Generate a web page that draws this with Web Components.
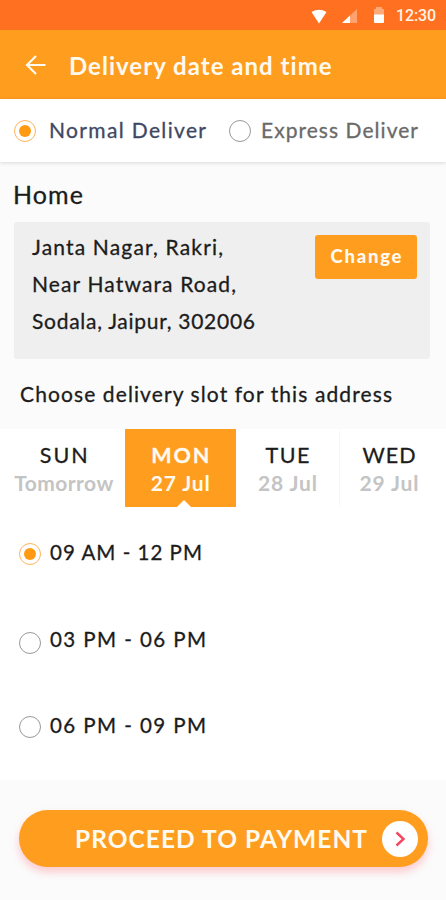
<!DOCTYPE html>
<html lang="en">
<head>
<meta charset="utf-8">
<title>Delivery date and time</title>
<style>
  body {
    margin: 0;
    width: 446px;
    height: 900px;
    overflow: hidden;
    background: #fbfbfb;
    color: #1c1c1c;
    font-family: Lato, "Liberation Sans", sans-serif;
  }
</style>
</head>
<body>
<delivery-screen></delivery-screen>

<script>
// One line of text, tracked so that it fills the given width
class TrackedText extends HTMLElement {
  constructor() {
    super();
    this.attachShadow({ mode: 'open' });
    this.shadowRoot.innerHTML = `
      <style>
        :host { display: block; width: max-content; white-space: nowrap; }
        span { display: inline-block; -webkit-text-stroke: var(--stroke, 0.3px); }
      </style>
      <span><slot></slot></span>
    `;
  }

  connectedCallback() {
    const target = Number(this.getAttribute('width'));
    const span = this.shadowRoot.querySelector('span');
    const count = this.textContent.length;
    const spacing = (target - span.getBoundingClientRect().width) / (count - 1);
    span.style.letterSpacing = spacing + 'px';
    span.style.marginRight = -spacing + 'px';
  }
}

class StatusBar extends HTMLElement {
  constructor() {
    super();
    this.attachShadow({ mode: 'open' });
    this.shadowRoot.innerHTML = `
      <style>
        :host {
          display: flex;
          align-items: center;
          justify-content: flex-end;
          box-sizing: border-box;
          height: 30px;
          padding: 2px 10px 0 0;
          background: #ff7020;
          color: #fff3e6;
          font: 500 16px/28px Roboto, sans-serif;
          --stroke: 0;
        }
        svg { display: block; margin-right: 11px; }
      </style>
      <svg width="74" height="18" viewBox="0 0 74 18" fill="#fff">
        <path d="M0.500 5Q8 0.500 15.500 5L8 16.500Z"/>
        <path d="M46 2V16H31Z" opacity=".35"/>
        <path d="M39 8.500V16H31Z"/>
        <path d="M63 2h2V0h6v2h2v6H63Z" opacity=".4"/>
        <path d="M63 7.500h10v7.500q0 1-1 1h-8q-1 0-1-1Z"/>
      </svg>
      <tracked-text width="40">12:30</tracked-text>
    `;
  }
}

class AppHeader extends HTMLElement {
  constructor() {
    super();
    this.attachShadow({ mode: 'open' });
    this.shadowRoot.innerHTML = `
      <style>
        :host {
          display: flex;
          align-items: center;
          box-sizing: border-box;
          height: 69px;
          padding: 1px 0 0 24px;
          background: #ff9d1f;
          color: #fffaf0;
          font-size: 24px;
          font-weight: 700;
          --stroke: 0;
        }
        svg { display: block; margin-right: 23px; }
      </style>
      <svg width="22" height="20" viewBox="0 0 22 20" fill="none" stroke="#fffaf0" stroke-width="2.200">
        <path d="M21.500 10H3M12 1L3 10L12 19"/>
      </svg>
      <slot></slot>
    `;
  }
}

class RadioOption extends HTMLElement {
  constructor() {
    super();
    this.attachShadow({ mode: 'open' });
    this.shadowRoot.innerHTML = `
      <style>
        :host { display: flex; align-items: center; }
        i {
          display: flex;
          align-items: center;
          justify-content: center;
          box-sizing: border-box;
          width: 22px;
          height: 22px;
          margin-right: var(--gap, 9px);
          margin-top: var(--drop, 0);
          border: 1.500px solid #999;
          border-radius: 50%;
          background: #fff;
        }
        :host([checked]) i { border-color: #ffb45c; }
        :host([checked]) i::before {
          content: '';
          width: 12px;
          height: 12px;
          border-radius: 50%;
          background: #ff9a12;
        }
      </style>
      <i></i>
      <slot></slot>
    `;
  }
}

class AddressCard extends HTMLElement {
  constructor() {
    super();
    this.attachShadow({ mode: 'open' });
    this.shadowRoot.innerHTML = `
      <style>
        :host {
          display: flex;
          justify-content: space-between;
          align-items: flex-start;
          box-sizing: border-box;
          height: 137px;
          margin: 13px 16px 0 14px;
          padding: 6px 13px 0 18px;
          border-radius: 3px;
          background: #efefef;
          font-size: 21px;
          line-height: 37.200px;
        }
        button {
          display: flex;
          justify-content: center;
          width: 102px;
          height: 44px;
          margin: 7px 0 0;
          padding: 0;
          border: 0;
          border-radius: 3px;
          background: #ff9d1f;
          color: #fffaf0;
          font: 900 18.500px/42px Lato, sans-serif;
          --stroke: 0;
        }
      </style>
      <div><slot></slot></div>
      <button><tracked-text width="71">Change</tracked-text></button>
    `;
  }
}

class DayTab extends HTMLElement {
  constructor() {
    super();
    this.attachShadow({ mode: 'open' });
    this.shadowRoot.innerHTML = `
      <style>
        :host {
          display: flex;
          flex-direction: column;
          align-items: center;
          box-sizing: border-box;
          position: relative;
          height: 78px;
          padding-top: 12px;
          font-size: 21.500px;
          line-height: 28px;
          color: #1c1c1c;
        }
        ::slotted([slot="date"]) { color: #c4c4c4; font-size: 21px; font-weight: 700; --stroke: 0; }
        :host([selected]) { background: #ff9d1f; color: #fffaf0; font-weight: 700; }
        :host([selected]) ::slotted([slot="date"]) { color: #fffaf0; }
        :host([selected])::after {
          content: '';
          position: absolute;
          left: 52px;
          bottom: 0;
          border: 7px solid transparent;
          border-top: 0;
          border-bottom: 7px solid #fff;
        }
      </style>
      <slot></slot>
      <slot name="date"></slot>
    `;
  }
}

class PayButton extends HTMLElement {
  constructor() {
    super();
    this.attachShadow({ mode: 'open' });
    this.shadowRoot.innerHTML = `
      <style>
        :host {
          display: flex;
          align-items: center;
          justify-content: flex-end;
          box-sizing: border-box;
          width: 409px;
          height: 57px;
          padding-right: 10px;
          border-radius: 29px;
          background: #ff9d1f;
          color: #fffaf0;
          font-size: 24.500px;
          font-weight: 700;
          box-shadow: 0 5px 9px rgba(255, 85, 100, 0.3);
          --stroke: 0;
        }
        svg { display: block; margin-left: 15px; }
      </style>
      <slot></slot>
      <svg width="36" height="36" viewBox="0 0 36 36" fill="none">
        <circle cx="18" cy="18" r="18" fill="#fff"/>
        <path d="M14.500 11.500L21.500 18L14.500 24.500" stroke="#f4475f" stroke-width="2.400"/>
      </svg>
    `;
  }
}

class DeliveryScreen extends HTMLElement {
  constructor() {
    super();
    this.attachShadow({ mode: 'open' });
    this.shadowRoot.innerHTML = `
      <style>
        :host { display: flex; flex-direction: column; height: 900px; }
        .modes {
          display: flex;
          align-items: center;
          height: 63px;
          padding-left: 14px;
          background: #fff;
          box-shadow: 0 1px 4px rgba(0, 0, 0, 0.14);
          font-size: 21px;
          color: #6a6a6a;
        }
        .modes tracked-text { padding-bottom: 3px; }
        .modes radio-option { --gap: 10px; }
        .modes [checked] { width: 215px; --gap: 13px; color: #3f4863; }
        .home { margin: 17px 0 0 13px; font-size: 25px; line-height: 30px; }
        .choose { margin: 20px 0 20px 20px; font-size: 21px; line-height: 30px; }
        .tabs {
          display: grid;
          grid-template-columns: 124.500px 111.500px 103px 99px;
          height: 78px;
          background: #fff;
        }
        .tabs day-tab:first-child { padding-left: 3px; }
        .tabs day-tab:last-child { border-left: 1px solid #f7f7f7; }
        .slots {
          display: grid;
          grid-auto-rows: 86.500px;
          box-sizing: border-box;
          height: 273px;
          padding: 2px 0 0 19px;
          background: #fff;
          font-size: 20.500px;
        }
        footer { padding: 30px 0 0 19px; }
      </style>
      <status-bar></status-bar>
      <app-header><tracked-text width="263">Delivery date and time</tracked-text></app-header>
      <div class="modes">
        <radio-option checked><tracked-text width="157">Normal Deliver</tracked-text></radio-option>
        <radio-option><tracked-text width="157">Express Deliver</tracked-text></radio-option>
      </div>
      <tracked-text class="home" width="70">Home</tracked-text>
      <address-card>
        <tracked-text width="191">Janta Nagar, Rakri,</tracked-text>
        <tracked-text width="204">Near Hatwara Road,</tracked-text>
        <tracked-text width="223">Sodala, Jaipur, 302006</tracked-text>
      </address-card>
      <tracked-text class="choose" width="372">Choose delivery slot for this address</tracked-text>
      <div class="tabs">
        <day-tab>
          <tracked-text width="48">SUN</tracked-text>
          <tracked-text slot="date" width="99">Tomorrow</tracked-text>
        </day-tab>
        <day-tab selected>
          <tracked-text width="58">MON</tracked-text>
          <tracked-text slot="date" width="59">27 Jul</tracked-text>
        </day-tab>
        <day-tab>
          <tracked-text width="44">TUE</tracked-text>
          <tracked-text slot="date" width="59">28 Jul</tracked-text>
        </day-tab>
        <day-tab>
          <tracked-text width="53">WED</tracked-text>
          <tracked-text slot="date" width="59">29 Jul</tracked-text>
        </day-tab>
      </div>
      <div class="slots">
        <radio-option checked style="--drop: 4px"><tracked-text width="152">09 AM - 12 PM</tracked-text></radio-option>
        <radio-option style="--drop: 9px"><tracked-text width="156">03 PM - 06 PM</tracked-text></radio-option>
        <radio-option style="--drop: 3px"><tracked-text width="156">06 PM - 09 PM</tracked-text></radio-option>
      </div>
      <footer>
        <pay-button><tracked-text width="292">PROCEED TO PAYMENT</tracked-text></pay-button>
      </footer>
    `;
  }
}

customElements.define('delivery-screen', DeliveryScreen);
customElements.define('status-bar', StatusBar);
customElements.define('app-header', AppHeader);
customElements.define('radio-option', RadioOption);
customElements.define('address-card', AddressCard);
customElements.define('day-tab', DayTab);
customElements.define('pay-button', PayButton);
// last, so every text is measured with its final font
customElements.define('tracked-text', TrackedText);
</script>
</body>
</html>
